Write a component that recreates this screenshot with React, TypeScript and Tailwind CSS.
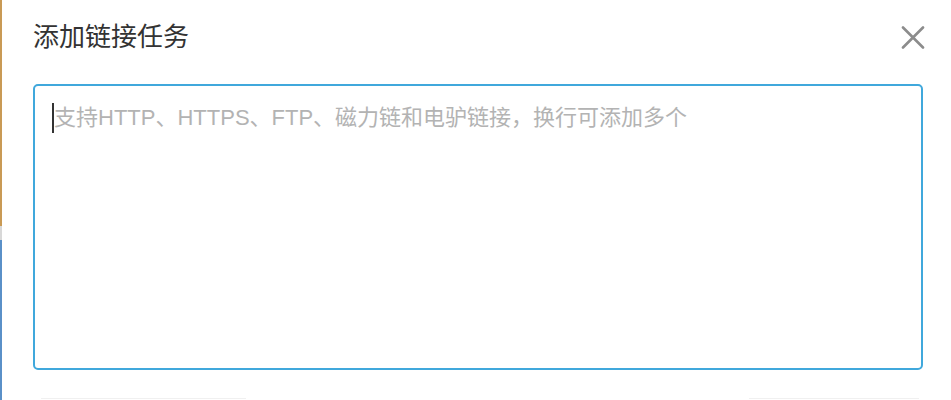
import * as React from "react";

const font = {
  fontFamily:
    '"Liberation Sans", "Noto Sans CJK SC", sans-serif',
};

export default function App() {
  return (
    <div
      className="flex h-[400px] w-[951px] overflow-hidden bg-white"
      style={font}
    >
      {/* Page behind the dialog peeking through on the left */}
      <div className="flex w-[2px] shrink-0 flex-col">
        <div className="h-[226px] bg-[#c99a55]" />
        <div className="h-[14px] bg-[#d8d8d8]" />
        <div className="flex-1 bg-[#5a90c8]" />
      </div>

      <div className="flex flex-1 flex-col pl-[31px] pr-[28px]">
        {/* Header */}
        <div className="flex h-[84px] items-start justify-between pt-[19px]">
          <h1 className="text-[26px] leading-[36px] text-[#333333]">
            添加链接任务
          </h1>
          <button
            type="button"
            aria-label="关闭"
            className="mt-[7px] mr-[-2px] flex h-[24px] w-[24px] items-center justify-center"
          >
            <svg
              viewBox="0 0 24 24"
              className="h-[24px] w-[24px]"
              fill="none"
              stroke="#8c8c8c"
              strokeWidth={2.6}
              strokeLinecap="round"
            >
              <path d="M2 1.5 L22 21.5 M22 1.5 L2 21.5" />
            </svg>
          </button>
        </div>

        {/* Link input */}
        <div className="h-[286px] rounded-[5px] border-2 border-[#40a8dc] px-[17px] pt-[17px]">
          <div className="flex items-center text-[22px] leading-[30px] text-[#b3b3b3]">
            <span className="inline-block h-[30px] w-[2px] bg-[#333333]" />
            支持HTTP、HTTPS、FTP、磁力链和电驴链接，换行可添加多个
          </div>
        </div>

        {/* Tops of the footer controls */}
        <div className="mt-[28px] flex justify-between">
          <div className="ml-[8px] h-[2px] w-[205px] border-t border-[#f0f0f0]" />
          <div className="mr-[4px] h-[2px] w-[170px] border-t border-[#f0f0f0]" />
        </div>
      </div>
    </div>
  );
}
